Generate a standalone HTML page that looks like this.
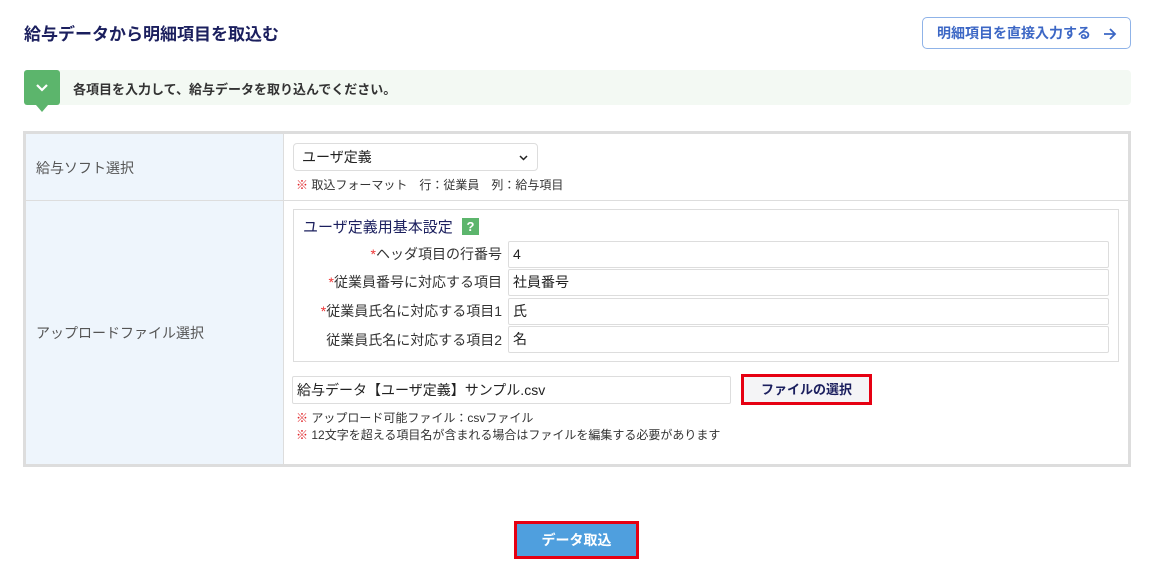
<!DOCTYPE html>
<html><head><meta charset="utf-8"><style>
*{box-sizing:border-box;margin:0;padding:0}
body{width:1162px;height:570px;background:#fff;font-family:"Liberation Sans","Noto Sans CJK JP",sans-serif;color:#333;position:relative;overflow:hidden}
.a{position:absolute}
.inp{position:absolute;border:1px solid #ddd;border-radius:2px;background:#fff;font-size:14px;padding-left:4px;line-height:24px;height:27px;color:#222}
.lbl{position:absolute;font-size:14px;color:#333;text-align:right;width:220px;left:282px}
.star{color:#e33}
.note{font-size:12px;color:#333}
.kome{color:#e0262a;font-weight:bold}
</style></head><body>
<div class="a" style="left:24px;top:20px;font-size:17px;font-weight:bold;color:#1b1f5e">給与データから明細項目を取込む</div>
<div class="a" style="left:922px;top:17px;width:209px;height:32px;border:1px solid #8fb3e8;border-radius:5px;color:#3c67c5;font-size:14px;font-weight:bold;line-height:30px;padding-left:14px">明細項目を直接入力する<svg style="position:absolute;left:180px;top:10px" width="14" height="12"><path d="M1 6 H12 M7 1 L12 6 L7 11" stroke="#3c67c5" stroke-width="1.8" fill="none"/></svg></div>
<div class="a" style="left:24px;top:70px;width:1107px;height:35px;background:#f3f9f3;border-radius:4px"></div>
<div class="a" style="left:24px;top:70px;width:36px;height:35px;background:#5cb56c;border-radius:3px"></div>
<div class="a" style="left:36px;top:105px;width:0;height:0;border-left:6px solid transparent;border-right:6px solid transparent;border-top:7px solid #5cb56c"></div>
<svg class="a" style="left:35px;top:83px" width="14" height="10"><path d="M2 2 L7 7 L12 2" stroke="#fff" stroke-width="2.2" fill="none"/></svg>
<div class="a" style="left:73px;top:79px;font-size:13px;font-weight:bold;color:#333">各項目を入力して、給与データを取り込んでください。</div>

<div class="a" style="left:23px;top:131px;width:1108px;height:336px;border:3px solid #ddd;background:#fff"></div>
<div class="a" style="left:26px;top:134px;width:258px;height:330px;background:#eef5fc;border-right:1px solid #ddd"></div>
<div class="a" style="left:26px;top:200px;width:1102px;height:1px;background:#ddd"></div>
<div class="a" style="left:36px;top:158px;font-size:14px;color:#555">給与ソフト選択</div>
<div class="a" style="left:36px;top:323px;font-size:14px;color:#555">アップロードファイル選択</div>

<div class="inp" style="left:293px;top:143px;width:245px;height:28px;border-radius:4px;line-height:26px;padding-left:8px">ユーザ定義<svg style="position:absolute;right:9px;top:11px" width="9" height="6"><path d="M1 1 L4.5 4.5 L8 1" stroke="#222" stroke-width="1.5" fill="none"/></svg></div>
<div class="a note" style="left:296px;top:176px"><span class="kome">※</span> 取込フォーマット　行：従業員　列：給与項目</div>

<div class="a" style="left:293px;top:209px;width:826px;height:153px;border:1px solid #ddd"></div>
<div class="a" style="left:303px;top:216px;font-size:15px;color:#1b1f5e">ユーザ定義用基本設定</div>
<div class="a" style="left:462px;top:218px;width:17px;height:17px;background:#5cb56c;color:#fff;font-size:13px;font-weight:bold;text-align:center;line-height:17px">?</div>
<div class="lbl" style="top:244px"><span class="star">*</span>ヘッダ項目の行番号</div>
<div class="lbl" style="top:272px"><span class="star">*</span>従業員番号に対応する項目</div>
<div class="lbl" style="top:301px"><span class="star">*</span>従業員氏名に対応する項目1</div>
<div class="lbl" style="top:330px">従業員氏名に対応する項目2</div>
<div class="inp" style="left:508px;top:241px;width:601px">4</div>
<div class="inp" style="left:508px;top:269px;width:601px">社員番号</div>
<div class="inp" style="left:508px;top:298px;width:601px">氏</div>
<div class="inp" style="left:508px;top:326px;width:601px">名</div>

<div class="inp" style="left:292px;top:376px;width:439px;height:28px;line-height:26px">給与データ【ユーザ定義】サンプル.csv</div>
<div class="a" style="left:741px;top:374px;width:131px;height:31px;border:3px solid #e60012;background:#f4f4f6;font-size:13px;font-weight:bold;color:#1b1f5e;text-align:center;line-height:25px">ファイルの選択</div>
<div class="a note" style="left:296px;top:409px"><span class="kome">※</span> アップロード可能ファイル：csvファイル</div>
<div class="a note" style="left:296px;top:426px"><span class="kome">※</span> 12文字を超える項目名が含まれる場合はファイルを編集する必要があります</div>

<div class="a" style="left:514px;top:521px;width:125px;height:38px;border:3px solid #e60012;background:#4f9fde;color:#fff;font-size:14px;font-weight:bold;text-align:center;line-height:32px">データ取込</div>
</body></html>
